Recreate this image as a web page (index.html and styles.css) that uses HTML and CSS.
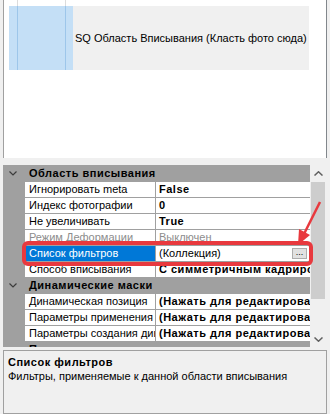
FILE: index.html
```html
<!DOCTYPE html>
<html lang="ru">
<head>
<meta charset="UTF-8">
<meta name="viewport" content="width=device-width, initial-scale=1.0">
<title>Свойства области вписывания</title>
<link rel="stylesheet" href="styles.css">
</head>
<body>

<div class="list-panel">
    <div class="list-prev"><span class="thumb-frame"></span></div>
    <div class="list-item">
        <div class="item-thumb"><span class="thumb-frame"></span></div>
        <div class="item-label">SQ Область Вписывания (Класть фото сюда)</div>
    </div>
</div>

<div class="prop-grid">
    <div class="prop-rows">
        <div class="cat">
            <svg class="chev" width="8" height="5" viewBox="0 0 8 5"><polyline points="0.5,0.5 4,4 7.5,0.5"/></svg>
            <span>Область вписывания</span>
        </div>
        <div class="row">
            <div class="name">Игнорировать meta</div>
            <div class="value bold">False</div>
        </div>
        <div class="row">
            <div class="name">Индекс фотографии</div>
            <div class="value bold">0</div>
        </div>
        <div class="row">
            <div class="name">Не увеличивать</div>
            <div class="value bold">True</div>
        </div>
        <div class="row disabled">
            <div class="name">Режим Деформации</div>
            <div class="value">Выключен</div>
        </div>
        <div class="row sel">
            <div class="name">Список фильтров</div>
            <div class="value">
                <span>(Коллекция)</span>
                <span class="dots">...</span>
            </div>
        </div>
        <div class="row">
            <div class="name">Способ вписывания</div>
            <div class="value bold">С симметричным кадрированием</div>
        </div>
        <div class="cat">
            <svg class="chev" width="8" height="5" viewBox="0 0 8 5"><polyline points="0.5,0.5 4,4 7.5,0.5"/></svg>
            <span>Динамические маски</span>
        </div>
        <div class="row">
            <div class="name">Динамическая позиция</div>
            <div class="value bold">(Нажать для редактирования)</div>
        </div>
        <div class="row">
            <div class="name">Параметры применения</div>
            <div class="value bold">(Нажать для редактирования)</div>
        </div>
        <div class="row">
            <div class="name">Параметры создания динамических масок</div>
            <div class="value bold">(Нажать для редактирования)</div>
        </div>
        <div class="cat">
            <svg class="chev" width="8" height="5" viewBox="0 0 8 5"><polyline points="0.5,0.5 4,4 7.5,0.5"/></svg>
            <span>Прочее</span>
        </div>
    </div>
    <div class="scrollbar">
        <div class="sb-btn">
            <svg width="9" height="5" viewBox="0 0 9 5"><polyline points="0.5,4.5 4.5,0.8 8.5,4.5"/></svg>
        </div>
        <div class="sb-track"><div class="sb-thumb"></div></div>
        <div class="sb-btn">
            <svg width="9" height="5" viewBox="0 0 9 5"><polyline points="0.5,0.5 4.5,4.2 8.5,0.5"/></svg>
        </div>
    </div>
</div>

<div class="desc">
    <div class="desc-title">Список фильтров</div>
    <div class="desc-text">Фильтры, применяемые к данной области вписывания</div>
</div>

<!-- red callout drawn over the screenshot -->
<svg class="annotation" width="330" height="414" viewBox="0 0 330 414">
    <rect x="24" y="243" width="287" height="21" rx="4" fill="none" stroke="#e8393e" stroke-width="4"/>
    <line x1="320" y1="202" x2="303" y2="236" stroke="#e8393e" stroke-width="2.5"/>
    <polygon points="298,245 310,235 299,229" fill="#e8393e"/>
</svg>

</body>
</html>
```

FILE: styles.css
```css
body {
    margin: 0;
    padding: 0 3px;
    width: 324px;
    height: 414px;
    overflow: hidden;
    position: relative;
    background: #f0f0f0;
    font-family: "Liberation Sans", Arial, sans-serif;
    font-size: 11px;
    color: #000;
}

/* list of fit areas */
.list-panel {
    height: 158px;
    background: #fff;
    border-left: 1px solid #a0a0a0;
    border-right: 1px solid #82878c;
}
.list-prev {
    height: 6px;
    padding-left: 13px;
}
.thumb-frame {
    display: block;
    width: 47px;
    height: 100%;
    border-left: 1px solid #dcdcdc;
    border-right: 1px solid #dcdcdc;
}
.list-item {
    display: flex;
    width: 300px;
    height: 64px;
    margin-left: 5px;
}
.item-thumb {
    width: 64px;
    padding-left: 8px;
    box-sizing: border-box;
    background: #c4dff6;
}
.item-thumb .thumb-frame {
    border-color: #9dc6ea;
}
.item-label {
    flex: 1;
    display: flex;
    align-items: center;
    padding-left: 2px;
    background: #f0f0f0;
    font-size: 11px;
    white-space: nowrap;
    overflow: hidden;
}

/* property grid */
.prop-grid {
    display: flex;
    height: 182px;
    margin-top: 7px;
    overflow: hidden;
}
.prop-rows {
    flex: 1;
    background: #a0a0a0;
    overflow: hidden;
}
.cat {
    display: flex;
    align-items: center;
    height: 16px;
    font-weight: bold;
    letter-spacing: 0.5px;
}
.chev {
    margin-left: 6px;
    margin-right: 12px;
    fill: none;
    stroke: #3c3c3c;
    stroke-width: 1.2;
}
.row {
    display: flex;
    gap: 1px;
    height: 16px;
    padding: 1px 0 0 22px;
    box-sizing: border-box;
}
.name, .value {
    background: #fff;
    line-height: 15px;
    white-space: nowrap;
    overflow: hidden;
}
.name {
    width: 130px;
    flex: none;
    padding-left: 4px;
    box-sizing: border-box;
}
.value {
    flex: 1;
    padding-left: 3px;
}
.bold {
    font-weight: bold;
    letter-spacing: 0.5px;
}
.row.disabled {
    color: #8d8d8d;
}
.row.sel .name {
    background: #0078d7;
    color: #fff;
}
.row.sel .value {
    display: flex;
    align-items: center;
    justify-content: space-between;
}
.dots {
    width: 13px;
    height: 9px;
    margin-right: 3px;
    border: 1px solid #adadad;
    background: #e1e1e1;
    font-size: 9px;
    line-height: 7px;
    text-align: center;
}

.scrollbar {
    width: 17px;
    display: flex;
    flex-direction: column;
    background: #f0f0f0;
}
.sb-btn {
    height: 16px;
    display: flex;
    align-items: center;
    justify-content: center;
}
.sb-btn svg {
    fill: none;
    stroke: #606060;
    stroke-width: 1.5;
}
.sb-track {
    flex: 1;
    padding: 1px 2px 0 1px;
}
.sb-thumb {
    height: 117px;
    background: #cdcdcd;
}

/* help panel */
.desc {
    height: 58px;
    margin-top: 3px;
    padding: 4px 4px 0;
    border: 1px solid #a0a0a0;
    line-height: 14px;
}
.desc-title {
    font-weight: bold;
    letter-spacing: 0.5px;
}

.annotation {
    position: absolute;
    top: 0;
    left: 0;
}
```
